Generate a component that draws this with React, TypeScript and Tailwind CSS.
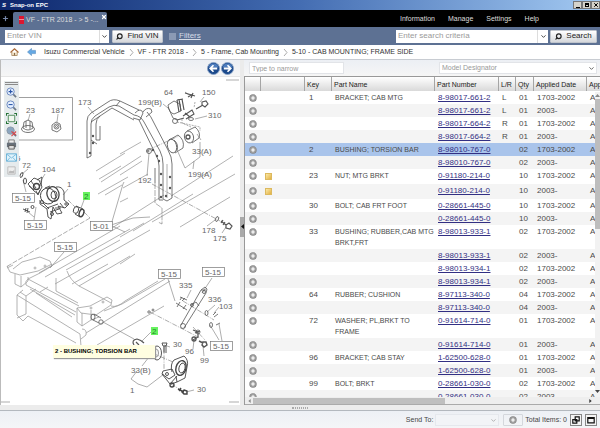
import React from "react";
import { ChevronDown, Search, Plus, X } from "lucide-react";

type Row = { key?: string; name?: string; part: string; lr?: string; qty: string; date: string; note?: boolean; height: string };

const H = "h-[13px]";
const N = "h-[15px]";
const D = "h-6";
const OLD = "1703-2002";
const NEW = "2003-";

const rows: Row[] = [
  { key: "1", name: "BRACKET; CAB MTG", part: "8-98017-661-2", lr: "L", qty: "01", date: OLD, height: H },
  { part: "8-98017-661-2", lr: "L", qty: "01", date: NEW, height: H },
  { part: "8-98017-664-2", lr: "R", qty: "01", date: OLD, height: H },
  { part: "8-98017-664-2", lr: "R", qty: "01", date: NEW, height: H },
  { key: "2", name: "BUSHING; TORSION BAR", part: "8-98010-767-0", qty: "02", date: OLD, height: H },
  { part: "8-98010-767-0", qty: "02", date: NEW, height: H },
  { key: "23", name: "NUT; MTG BRKT", part: "0-91180-214-0", qty: "10", date: OLD, note: true, height: N },
  { part: "0-91180-214-0", qty: "10", date: NEW, note: true, height: N },
  { key: "30", name: "BOLT; CAB FRT FOOT", part: "0-28661-445-0", qty: "10", date: OLD, height: H },
  { part: "0-28661-445-0", qty: "10", date: NEW, height: H },
  { key: "33", name: "BUSHING; RUBBER,CAB MTG BRKT,FRT", part: "8-98013-933-1", qty: "02", date: OLD, height: D },
  { part: "8-98013-933-1", qty: "02", date: NEW, height: H },
  { part: "8-98013-934-1", qty: "02", date: OLD, height: H },
  { part: "8-98013-934-1", qty: "02", date: NEW, height: H },
  { key: "64", name: "RUBBER; CUSHION", part: "8-97113-340-0", qty: "04", date: OLD, height: H },
  { part: "8-97113-340-0", qty: "04", date: NEW, height: H },
  { key: "72", name: "WASHER; PL,BRKT TO FRAME", part: "0-91614-714-0", qty: "01", date: OLD, height: D },
  { part: "0-91614-714-0", qty: "01", date: NEW, height: H },
  { key: "96", name: "BRACKET; CAB STAY", part: "1-62500-628-0", qty: "01", date: OLD, height: H },
  { part: "1-62500-628-0", qty: "01", date: NEW, height: H },
  { key: "99", name: "BOLT; BRKT", part: "0-28661-030-0", qty: "02", date: OLD, height: H },
  { part: "0-28661-030-0", qty: "02", date: NEW, height: H },
];

function PlusBadge() {
  return (
    <svg viewBox="0 0 8 8" className="block size-2">
      <circle cx="4" cy="4" r="3.7" fill="#858585" />
      <circle cx="4" cy="4" r="2.9" fill="#a3a3a3" />
      <path d="M4 2.2v3.6M2.2 4h3.6" stroke="#fff" strokeWidth="1.2" />
    </svg>
  );
}

function PartsTable() {
  const th = "h-[14px] border-r border-[#a5a5a5] p-0 pl-[2px] text-left font-normal whitespace-nowrap";
  return (
    <table className="w-full table-fixed border-separate border-spacing-0 text-[8px] leading-[11px] text-[#4a4a4a]">
      <colgroup>
        <col className="w-4" />
        <col className="w-11" />
        <col className="w-[27px]" />
        <col />
        <col className="w-16" />
        <col className="w-[17px]" />
        <col className="w-[18px]" />
        <col className="w-[53px]" />
        <col className="w-[13px]" />
      </colgroup>
      <thead>
        <tr className="bg-linear-to-b from-white to-[#d9d9d9] text-[7px] text-[#222]">
          <th className={th} aria-label="Expand" />
          <th className={th} aria-label="Notes" />
          <th className={th}>Key</th>
          <th className={th}>Part Name</th>
          <th className={th}>Part Number</th>
          <th className={th}>L/R</th>
          <th className={th}>Qty</th>
          <th className={th}>Applied Date</th>
          <th className="overflow-hidden p-0 pl-[2px] text-left font-normal">App</th>
        </tr>
      </thead>
      <tbody>
        {rows.map((r, i) => {
          const bg = i === 4 ? "bg-[#a9c4eb]" : i % 2 ? "bg-[#f4f4f4]" : "bg-white";
          return (
            <tr key={i} className={`${r.height} ${bg} align-top`}>
              <td className="p-0 pt-[3px] pl-1">
                <button className="block" aria-label="Expand row"><PlusBadge /></button>
              </td>
              <td className="p-0 pt-1 pl-1">
                {r.note && <span className="block size-[7px] border border-[#dcb95f] bg-linear-to-br from-[#fae9a6] to-[#e3b13e]" />}
              </td>
              <td className="p-0 pt-px pl-1">{r.key}</td>
              <td className="p-0 pt-px pl-[3px] text-[7px]">{r.name}</td>
              <td className="p-0 pt-px pl-[3px] whitespace-nowrap">
                <a href="#part" className="text-[#322f83] underline">{r.part}</a>
              </td>
              <td className="p-0 pt-px pl-[3px]">{r.lr}</td>
              <td className="p-0 pt-px pl-[3px]">{r.qty}</td>
              <td className="p-0 pt-px pl-[3px] whitespace-nowrap">{r.date}</td>
              <td className="overflow-hidden p-0 pt-px pl-[3px]">A</td>
            </tr>
          );
        })}
      </tbody>
    </table>
  );
}

const labels: [string, number, number][] = [
  ["23", 26, 113], ["187", 51, 113], ["173", 78, 105], ["5", 16, 161], ["72", 22, 168], ["104", 42, 172],
  ["1", 67, 187], ["64", 164, 95], ["150", 202, 95], ["199(B)", 138, 105], ["310", 208, 118],
  ["33(A)", 192, 154], ["199(A)", 188, 177], ["192", 138, 183], ["178", 202, 233], ["175", 213, 241],
  ["335", 179, 288], ["336", 208, 302], ["103", 219, 309], ["30", 173, 347], ["96", 185, 354],
  ["99", 200, 363], ["33(B)", 131, 373], ["1", 130, 393], ["30", 197, 392],
];

const boxes: [string, number, number][] = [
  ["5-15", 12, 193], ["5-15", 24, 220], ["5-01", 90, 221], ["5-15", 54, 242],
  ["5-15", 158, 269], ["5-15", 202, 267], ["5-15", 210, 341],
];

function Diagram() {
  return (
    <svg viewBox="1 77 238 328" width="238" height="328" className="block" fill="none" role="img" aria-label="Cab mounting, frame side">
      {/* frame rails */}
      <g stroke="#a0a0a0" strokeWidth="0.8">
        <path d="M7 268 13 265M13 269 22 262 40 257 50 261 52 266 40 273 28 279M7 266 10 272 20 275 38 271 52 264M15 274V284L21 287V276M21 287 28 281V277" />
        <circle cx="45" cy="266" r="1" /><circle cx="35" cy="268" r="1" />
        <path d="M28 279 79 306M26 285 76 312M28 279Q25 281 26 285M36 293 72 317M30 289 75 315M17 295 80 334 81 346M17 295V315L23 321 28 316M26 296V314L17 318M20 292 26 296 36 289M28 316 76 343M23 290 17 295" />
        <path d="M39 273 120 226M45 277 130 229M55 284 150 230M40 292 48 287M56 278V291L78 303M67 271Q70 280 79 286L102 298M72 284 108 264M79 286 130 256M66 270 120 240M102 298 111 303" />
        <path d="M77 308V322L82 326 91 320 99 317M77 308 90 306 107 297 112 300 111 305 96 315 81 313ZM82 313V326M91 320V310" />
        <circle cx="103" cy="302" r="1" /><circle cx="91" cy="308" r="1" />
        <path d="M82 329Q87 329 86 335L81 339M86 333 170 281M97 345 164 306M111 306Q117 308 125 301L158 281M104 311 122 304 165 279" />
        <path d="M96 171 125 153M99 179 121 166M101 182 141 156M98 194 128 177M105 195 122 185M120 154 141 142M120 175 142 161M123 188 148 174M112 228 164 195M133 231 193 194M152 222 235 174M180 227 230 197M171 196 233 156M120 237 144 223M120 264 135 254M120 202 128 198" />
      </g>
      {/* leader and centre lines */}
      <g stroke="#777" strokeWidth="0.6">
        <path d="M30 114 28 121M58 114 57 122M88 107 94 114M28 169 22 174M45 174 40 182M23 180 26 192M68 189 63 195M84 200 81 208M34 217 28 212M34 220 36 207M111 225 123 184 124 182M111 225 133 218 150 217M112 226 125 232M64 252 50 268" />
        <path d="M68 200 75 207M84 212 90 218M90 218 6 267" strokeDasharray="5 1.5" />
        <path d="M185 92 189 95M204 97 200 102M163 104 168 108M207 116 195 119M201 140 197 134M200 142V157L185 168 178 152M194 161 193 169M147 176 149 153M207 226 215 220M222 233 226 227M191 290 187 298M215 305 207 312M219 307 214 313M168 279 175 301M212 278 202 293M219 340 210 325M222 341 219 324M151 332 142 341M103 322 134 339M170 347 164 345M193 349 194 340M204 356 203 346M142 366 149 357M131 379 137 371M131 379 138 384M138 384 147 387 164 374M194 390 186 392" />
        <path d="M148 150 179 136M152 184 220 221M150 312 200 338M183 301 214 320M164 347V370M145 350 173 362M193 327 205 340M171 384 184 392" strokeDasharray="5 1.2 1 1.2" />
        <path d="M155 183V203L162 208V224L158 222" strokeDasharray="6 1" />
        <path d="M195 102 194 108M177 122 200 127V131M182 119V123L191 127" strokeDasharray="2 1" />
        <path d="M226 80H239M1 402H10M229 402H239" />
      </g>
      {/* arch */}
      <g stroke="#555" strokeWidth="0.8">
        <path d="M87 158V121Q87 116 91 113L108 102Q113 98 120 101L139 110M147 112Q151 116 154 123L168 150Q172 157 172 164V198L167 201 163 199V164Q163 157 160 151L144 122Q141 116 134 115L119 106Q114 104 109 107L95 116Q91 119 91 124V156L87 158" />
        <path d="M139 120 156 155Q159 160 159 166V200H163M134 120 112 108 100 116Q96 119 96 124V140H100V126M135 113Q141 107 143 113L140 120 133 118M143 112Q146 107 151 109L152 112 146 117M91 122 100 116M120 101 116 106M91 140 97 144M155 168V183" />
        <path d="M167 164V198" stroke="#999" />
      </g>
      <g fill="#555">
        {[[93, 136], [93, 143], [90, 153], [153, 150], [157, 156], [159, 161], [161, 174], [161, 185], [161, 197], [170, 177], [170, 188], [166, 196]].map(([x, y]) => (
          <circle key={`${x}-${y}`} cx={x} cy={y} r="1.2" />
        ))}
      </g>
      {/* upper fittings */}
      <g stroke="#555" strokeWidth="0.8">
        <path d="M19 97.500H72.500V140H19" stroke="#888" />
        <ellipse cx="28" cy="129" rx="6.500" ry="3.500" /><path d="M23 128 24 122 28 120 32 122 33 128Q28 132 23 128M26 121V128M30 121V129" />
        <path d="M52 125 56 122 60 124 61 129 57 132 52 130Z" /><circle cx="56.500" cy="126.500" r="2.500" /><circle cx="56.500" cy="126.500" r="1" />
        <path d="M168 105 174 101 180 104 181 111 174 114Q169 113 168 105M168 107 173 118 177 120" />
        <path d="M177 100 179 112M179 99 181 111M182 99 184 110M177 100 183 99M185 93 195 96M188 97 193 94M191 98 193 93" strokeWidth="1.200" />
        <circle cx="175" cy="121" r="2.500" /><path d="M177 120 184 118M183 116 192 110 194 114 186 119M185 113 190 117M196 109 203 105M202 102 206 101 208 104 205 107 202 105Z" strokeWidth="1.100" />
        <ellipse cx="191" cy="119" rx="2.500" ry="1.500" />
        <ellipse cx="172" cy="146" rx="4.500" ry="7" transform="rotate(-15 172 146)" /><path d="M169 140 178 135Q185 140 183 148L175 153M174 140Q179 144 177 151" />
        <ellipse cx="189" cy="137" rx="4.500" ry="6" transform="rotate(-15 189 137)" /><path d="M187 131 195 127Q201 132 199 138L192 143" /><circle cx="188" cy="137" r="2" strokeWidth="1.300" />
        <circle cx="149" cy="151" r="2.500" /><circle cx="148" cy="151" r="1" />
        <ellipse cx="217" cy="219" rx="1.500" ry="2.500" transform="rotate(25 217 219)" /><path d="M221 221 226 225M223 220 221 223M225 222 223 225M226 225 229 223 232 226 230 229 226 228Z" strokeWidth="1.200" />
      </g>
      {/* left mount */}
      <g stroke="#444" strokeWidth="0.9">
        <ellipse cx="21.500" cy="175" rx="1.200" ry="2.500" transform="rotate(25 21.500 175)" /><ellipse cx="25" cy="181" rx="1.500" ry="3" />
        <path d="M28 184 34 178 39 180 42 187 38 194 34 191ZM37 180 42 177 41 186M29 186 34 190M31 181 36 188M36 191 38 195 40 190" /><circle cx="36.500" cy="186.500" r="3" strokeWidth="1.400" />
        <ellipse cx="48" cy="196" rx="7.500" ry="8" transform="rotate(-20 48 196)" /><ellipse cx="53" cy="194" rx="6" ry="7.500" transform="rotate(-15 53 194)" strokeWidth="1.300" /><ellipse cx="54" cy="195" rx="3" ry="4" />
        <path d="M45 188 50 186M56 187Q62 186 64 192V200L69 204 65 208 58 206 62 213 57 214 53 207 51 219 48 217 47 209 40 204V200M47 208 58 204M50 212 59 209M43 203 49 209M60 203 64 208M55 208H61" />
        <circle cx="66" cy="204" r="1.200" /><circle cx="52" cy="214" r="1.500" /><circle cx="42" cy="202" r="1.500" />
        <path d="M23 209 30 212M26 208 25 212M28 208 27 213" /><circle cx="32.500" cy="207" r="1.500" />
        <ellipse cx="76" cy="210" rx="2.500" ry="3.500" transform="rotate(20 76 210)" /><path d="M76 206 83 209M75 214 80 217" /><ellipse cx="81.500" cy="213" rx="2.200" ry="3.800" transform="rotate(20 81.500 213)" strokeWidth="1.400" />
      </g>
      {/* torsion bar end and stays */}
      <g stroke="#555" strokeWidth="0.8">
        <ellipse cx="93" cy="317" rx="2" ry="3" /><path d="M94 314 101 318M93 320 99 323" /><circle cx="101" cy="322" r="2.200" />
        <path d="M134 345Q131 340 137 339 141 340 144 343M136 342 139 345" strokeWidth="1.200" />
        <circle cx="149" cy="312" r="1.200" /><circle cx="153" cy="310" r="1" />
        <path d="M181 325 201 290 206 290M184 328 206 293M201 290 205 287 207 289 206 293M191 305 196 302 199 306" /><circle cx="183" cy="326" r="2.500" /><circle cx="204" cy="292" r="1.500" /><circle cx="192" cy="305" r="1.500" />
        <path d="M180 297 187 300M180 300 182 297M182 301 185 298M176 303 187 310M177 307 180 302M183 309 186 305M213 315 216 312M214 317 218 314" />
        <ellipse cx="206.500" cy="313" rx="1.500" ry="2.500" /><ellipse cx="211" cy="325" rx="1.500" ry="2.500" /><path d="M216 325 220 323" />
        <path d="M193 330 198 332V337L193 340M195 333 200 331" strokeWidth="1.200" /><circle cx="198" cy="332" r="2" /><circle cx="194" cy="339" r="2" strokeWidth="1.300" />
        <path d="M199 341 203 343M203 342 206 342 207 345 204 347 202 345Z" strokeWidth="1.400" />
      </g>
      {/* lower mount */}
      <g stroke="#444" strokeWidth="0.9">
        <ellipse cx="157" cy="353" rx="4.500" ry="7" /><ellipse cx="156" cy="353" rx="2.500" ry="4" stroke="#888" />
        <path d="M162 343H167L166 346H163ZM164 346V353M166 346V353" />
        <ellipse cx="181" cy="368" rx="5" ry="7.500" transform="rotate(15 181 368)" strokeWidth="1.400" /><ellipse cx="182" cy="368" rx="3" ry="5" transform="rotate(15 182 368)" />
        <path d="M172 372Q170 364 174 360L184 356Q189 360 187 367L185 378 177 382 171 384M163 371 172 369 175 375 169 379 162 374ZM162 374 170 384 177 376M177 382 176 376" /><circle cx="167" cy="374" r="1.500" /><circle cx="172" cy="385" r="2" strokeWidth="1.300" />
        <path d="M178 389 184 392M181 388 179 391M184 390 187 391 187 394 184 394 182 392Z" strokeWidth="1.400" />
      </g>
      <g fill="#666" stroke="none" className="text-[8px]">
        {boxes.map(([t, x, y]) => (
          <g key={`${x}-${y}`}>
            <rect x={x + 0.5} y={y + 0.5} width="22" height="9" fill="#fff" stroke="#777" strokeWidth="0.7" />
            <text x={x + 3} y={y + 8}>{t}</text>
          </g>
        ))}
        {labels.map(([t, x, y]) => <text key={`${x}-${y}`} x={x} y={y}>{t}</text>)}
        <rect x="83" y="192" width="7" height="8" fill="#67f35f" />
        <rect x="151" y="327" width="7" height="8" fill="#67f35f" />
        <g fill="#23882b"><text x="84" y="199">2</text><text x="152" y="334">2</text></g>
      </g>
    </svg>
  );
}

function ToolIcon({ kind }: { kind: string }) {
  return (
    <svg viewBox="0 0 12 12" className="size-[11px]" fill="none">
      {(kind === "Zoom in" || kind === "Zoom out" || kind === "Reset zoom") && (
        <>
          <path d="m7.500 7.500 3.500 3.500" stroke="#6b7786" strokeWidth="1.800" />
          <circle cx="5" cy="5" r="4" fill={kind === "Reset zoom" ? "#8ba6c0" : "#e6f0ff"} stroke={kind === "Reset zoom" ? "#8a97a5" : "#6684bd"} />
          {kind !== "Reset zoom" && <path d={kind === "Zoom in" ? "M2.800 5h4.400M5 2.800v4.400" : "M2.800 5h4.400"} stroke="#2855a8" strokeWidth="1.200" />}
          {kind === "Reset zoom" && <path d="m6 6 5 4M11 6l-5 5" stroke="#d4484c" strokeWidth="1.200" />}
        </>
      )}
      {kind === "Fit" && <><path d="M2.500 2.500h7v7h-7z" fill="#eff7ef" stroke="#4a8a57" /><path d="M.5 3V.5H3M9 .5h2.500V3M11.500 9v2.500H9M3 11.500H.5V9" stroke="#257336" strokeWidth="1.200" /></>}
      {kind === "Print" && <><path d="M3 1h6v4H3z" fill="#eee" stroke="#777" /><path d="M1 4h10v5H1z" fill="#68717b" /><path d="M3 7h6v4H3z" fill="#ddd" stroke="#555" /></>}
      {kind === "Mail" && <><path d="M.5 2h11v8H.5z" fill="#e0f3fc" stroke="#61aed5" /><path d="m1 2.500 5 4 5-4M1 10l3.500-4M11 10 7.500 6" stroke="#78b9dc" /></>}
      {kind === "Note" && <><path d="M2 2h8v8H2z" fill="#eee" stroke="#bbb" /><path d="M3 8c2-4 4 1 6-3v4H3z" fill="#bbb" /></>}
    </svg>
  );
}

function RoundArrow({ back }: { back?: boolean }) {
  return (
    <svg viewBox="0 0 14 14" className="size-[13px]">
      <circle cx="7" cy="7" r="6.500" fill="#1c4a8c" stroke="#8ba4c8" />
      <path d="M2 6a5 4.500 0 0 1 10 0z" fill="#4e7dbd" />
      <path d={back ? "M11 7H4M7 3.500 3.500 7 7 10.500" : "M3 7h7M7 3.500 10.500 7 7 10.500"} fill="none" stroke="#fff" strokeWidth="1.900" />
    </svg>
  );
}

function Crumb({ children }: { children: React.ReactNode }) {
  return <a href="#crumb" className="whitespace-nowrap">{children}</a>;
}

function Sep() {
  return (
    <svg viewBox="0 0 5 7" className="h-[7px] w-[5px] shrink-0" fill="none"><path d="m1 0 3 3.500L1 7" stroke="#aaa" /></svg>
  );
}

const winBtn = "flex h-2 w-[9px] items-center justify-center border border-[#777] bg-[#d6d3ca]";
const gloss = "flex items-center justify-center gap-1 rounded-[1px] border border-[#bfc4cc] bg-linear-to-b from-white to-[#d6d8dc] text-[8px] text-[#222]";

export default function App() {
  return (
    <div className="flex h-screen flex-col overflow-hidden bg-[#eceef2] font-['Liberation_Sans',Arial,sans-serif] text-[7px] leading-[10px] text-[#333]">
      <header className="flex h-[10px] shrink-0 items-center bg-linear-to-r from-[#0e276d] via-[#446db2] to-[#a4caf2] pl-[2px] text-[6px] font-bold text-white">
        <span className="mr-1 w-1 italic">S</span>
        <h1>Snap-on EPC</h1>
        <div className="ml-auto flex text-black">
          <button className={winBtn} aria-label="Minimize"><span className="mt-1 h-px w-1 bg-black" /></button>
          <button className={winBtn} aria-label="Restore"><span className="size-1 border border-t-2 border-black" /></button>
          <button className={winBtn} aria-label="Close"><X className="size-[6px]" strokeWidth={4} /></button>
        </div>
      </header>

      <nav className="flex h-[17px] shrink-0 items-end bg-black text-[#ddd]">
        <button className="flex h-full w-[13px] items-center pl-[2px] text-[#7889aa]" aria-label="New tab"><Plus className="size-[7px]" strokeWidth={4} /></button>
        <div className="flex h-[15px] w-[94px] items-center gap-[2px] rounded-t-[2px] bg-[#5d7193] pl-[6px]">
          <span className="flex h-2 w-[7px] items-center justify-center bg-[#dc1730]"><span className="h-px w-[5px] bg-[#f28c98]" /></span>
          <span className="whitespace-nowrap">VF - FTR 2018 - &gt; 5 -...</span>
          <button className="mr-[1px] ml-auto mb-[5px] text-white" aria-label="Close tab"><X className="size-[6px]" strokeWidth={5} /></button>
        </div>
        <div className="mr-[61px] ml-auto flex h-full items-center gap-[13px] pt-px">
          <a href="#information">Information</a>
          <a href="#manage">Manage</a>
          <a href="#settings">Settings</a>
          <a href="#help">Help</a>
        </div>
      </nav>

      <div className="flex h-[18px] shrink-0 items-center bg-[#5d7193] pr-[3px] pl-[5px]">
        <div className="flex h-[13px] w-[104px] bg-white">
          <input aria-label="Enter VIN" placeholder="Enter VIN" className="min-w-0 flex-1 px-[2px] text-[8px] outline-none placeholder:text-[#999]" />
          <button className="flex w-[10px] items-center justify-center border-l border-[#ddd]" aria-label="VIN list"><ChevronDown className="size-[7px]" strokeWidth={3} /></button>
        </div>
        <button className={`${gloss} ml-[3px] h-[13px] w-[51px]`}><Search className="size-[7px] -scale-x-100" strokeWidth={4} />Find VIN</button>
        <label className="ml-[6px] flex items-center gap-[3px] text-[8px] text-[#d5dce7]">
          <input type="checkbox" className="size-[7px] appearance-none bg-[#8b9ab4]" /><span className="underline">Filters</span>
        </label>
        <div className="ml-auto flex h-[13px] w-[152px] bg-white">
          <input aria-label="Search criteria" placeholder="Enter search criteria" className="min-w-0 flex-1 px-[2px] text-[8px] outline-none placeholder:text-[#999]" />
          <button className="flex w-[11px] items-center justify-center border-l border-[#ddd]" aria-label="Search history"><ChevronDown className="size-[7px]" strokeWidth={3} /></button>
        </div>
        <button className={`${gloss} ml-[2px] h-[13px] w-[47px]`}><Search className="size-[7px] -scale-x-100" strokeWidth={4} />Search</button>
      </div>

      <nav className="flex h-[15px] shrink-0 items-center gap-[6px] border-b border-[#c8ccd2] bg-white pl-[10px]" aria-label="Breadcrumb">
        <a href="#home" aria-label="Home">
          <svg viewBox="0 0 10 9" className="h-2 w-[9px]" fill="none"><path d="M2 4.500V8.500h6V4.500" fill="#fff4de" stroke="#aa8b60" /><path d="m.5 5 4.500-4 4.500 4" stroke="#a86836" strokeWidth="1.300" /><path d="M4.200 5.500h1.600v3H4.200z" fill="#8c6c49" /></svg>
        </a>
        <a href="#back" aria-label="Back" className="ml-[2px]">
          <svg viewBox="0 0 10 9" className="h-2 w-[9px]"><path d="M.5 4.500 5 .5v2.200h4.500v3.600H5v2.200z" fill="#64a8e3" stroke="#5b90c4" strokeWidth=".7" /></svg>
        </a>
        <span className="ml-[2px] flex items-center gap-1">
          <Crumb>Isuzu Commercial Vehicle</Crumb><Sep />
          <Crumb>VF - FTR 2018 -</Crumb><Sep />
          <Crumb>5 - Frame, Cab Mounting</Crumb><Sep />
          <Crumb>5-10 - CAB MOUNTING; FRAME SIDE</Crumb>
        </span>
      </nav>

      <main className="flex min-h-0 flex-1">
        <section className="flex w-2/5 min-w-0 shrink-0 flex-col border-l border-[#bbb]">
          <div className="flex h-[17px] shrink-0 items-center justify-end gap-px border-b border-[#e5e5e5] bg-linear-to-b from-[#eceff4] to-[#f6f6f6] pr-[6px]">
            <button aria-label="Previous page"><RoundArrow back /></button>
            <button aria-label="Next page"><RoundArrow /></button>
          </div>
          <div className="relative min-h-0 flex-1 overflow-hidden bg-white">
            <Diagram />
            <div className="absolute top-1 left-[3px] flex w-[15px] flex-col items-center bg-[#e6ebed]">
              <div className="my-px h-[3px] w-[13px] border-y border-[#8b8b8b]" />
              {["Zoom in", "Zoom out", "Fit", "Reset zoom", "Print", "Mail", "Note"].map((k) => (
                <button key={k} aria-label={k} className="flex h-[13px] items-center justify-center"><ToolIcon kind={k} /></button>
              ))}
            </div>
            <div role="tooltip" className="absolute top-[268px] left-[52px] h-[13px] w-[102px] bg-[#fffee1] pl-[2px] text-[6px] leading-[12px] font-bold whitespace-nowrap text-black shadow-[1px_1px_1px_#999]">2 - BUSHING; TORSION BAR</div>
          </div>
        </section>

        <div className="flex w-1 shrink-0 items-center bg-[#ebebeb]">
          <button className="mb-3 flex h-5 w-full items-center justify-center bg-[#aaa]" aria-label="Collapse drawing">
            <svg viewBox="0 0 3 5" className="h-[5px] w-[3px]"><path d="M3 0v5L0 2.500z" fill="#111" /></svg>
          </button>
        </div>

        <section className="flex min-w-0 flex-1 flex-col">
          <div className="flex h-4 shrink-0 items-center bg-linear-to-b from-[#eceff4] to-[#f6f6f6] pr-[3px] pl-[5px]">
            <input aria-label="Type to narrow" placeholder="Type to narrow" className="h-3 w-[95px] border border-[#e2e4e8] bg-white px-[2px] text-[7px] outline-none placeholder:text-[#999]" />
            <div className="relative ml-auto w-[158px]">
              <select aria-label="Model Designator" className="block h-3 w-full appearance-none border border-[#e2e4e8] bg-white p-0 px-[2px] text-[7px] leading-[10px] text-[#999] outline-none"><option>Model Designator</option></select>
              <ChevronDown className="pointer-events-none absolute top-[3px] right-[2px] size-[7px] text-[#555]" strokeWidth={3} />
            </div>
          </div>
          <div className="flex min-h-0 flex-1 flex-col border-t border-l border-[#999]">
            <div className="relative min-h-0 flex-1 overflow-hidden bg-white">
              <PartsTable />
              <div className="absolute top-[15px] right-0 bottom-0 flex w-[5px] flex-col items-center bg-[#f2f2f2]">
                <svg viewBox="0 0 5 3" className="mt-[2px] h-[3px] w-[5px]"><path d="M2.500 0 5 3H0z" fill="#888" /></svg>
                <div className="mt-[2px] h-[130px] w-full bg-[#bdbdbd]" />
                <svg viewBox="0 0 5 3" className="mt-auto mb-1 h-[3px] w-[5px]"><path d="M0 0h5L2.500 3z" fill="#444" /></svg>
              </div>
            </div>
            <div className="flex h-2 shrink-0 items-center border-b border-[#aaa] bg-[#eee] px-[3px]">
              <svg viewBox="0 0 3 5" className="h-1 w-[3px]"><path d="M3 0v5L0 2.500z" fill="#888" /></svg>
              <div className="ml-[2px] h-[6px] w-[55%] bg-[#bfbfbf]" />
              <svg viewBox="0 0 3 5" className="mr-[5px] ml-auto h-1 w-[3px]"><path d="M0 0v5l3-2.500z" fill="#333" /></svg>
            </div>
          </div>
        </section>
      </main>

      <div className="flex h-[6px] shrink-0 items-center justify-center border-b border-[#b3b8be] bg-[#ececec]">
        <div className="h-[2px] w-4 border-y border-dotted border-[#aaa]" />
      </div>
      <footer className="flex h-[17px] shrink-0 items-center justify-end bg-linear-to-b from-[#edf0f5] to-[#f4f5f7] pr-[3px] text-[#444]">
        <label htmlFor="send-to">Send To:</label>
        <div className="relative ml-[2px] w-16">
          <select id="send-to" className="block h-3 w-full appearance-none border border-[#e5e8ed] bg-[#f2f4f7]"><option aria-label="None" /></select>
          <ChevronDown className="pointer-events-none absolute top-[3px] right-[2px] size-[7px] text-[#aaa]" strokeWidth={3} />
        </div>
        <button className="ml-1 flex h-3 w-5 items-center justify-center rounded-[1px] border border-[#d4d7dc]" aria-label="Send"><PlusBadge /></button>
        <span className="ml-[2px] whitespace-nowrap">Total Items: 0</span>
        <button className="ml-[3px] flex size-3 items-center justify-center border border-[#888] bg-[#f4f4f4]" aria-label="Cascade windows">
          <svg viewBox="0 0 10 10" className="size-2" fill="#fff" stroke="#111" strokeWidth="1.500"><path d="M4 1h5v5H4zM1 4.500h5V9H1z" /></svg>
        </button>
        <button className="ml-[3px] flex size-3 items-center justify-center border border-[#888] bg-[#f4f4f4]" aria-label="Maximize">
          <svg viewBox="0 0 10 10" className="size-2" fill="none" stroke="#111" strokeWidth="1.500"><path d="M1 2h8v6.500H1zM1 3h8" /></svg>
        </button>
      </footer>
    </div>
  );
}
